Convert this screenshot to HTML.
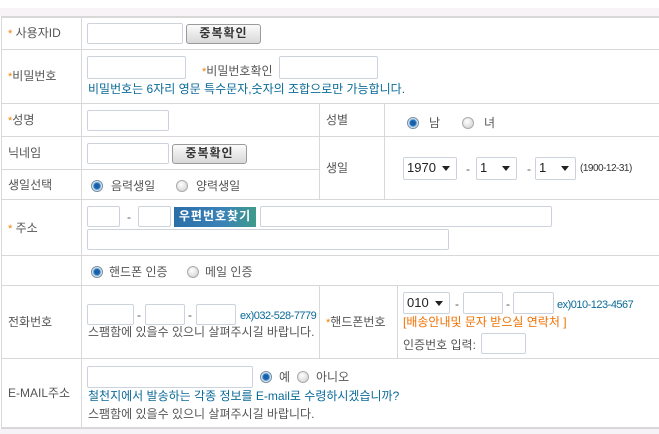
<!DOCTYPE html>
<html><head><meta charset="utf-8"><style>
*{margin:0;padding:0;box-sizing:border-box}
body{width:659px;height:434px;background:#fff;position:relative;overflow:hidden;font-family:"Liberation Sans","Noto Sans CJK KR","NanumGothic",sans-serif;font-size:12px;color:#555}
.a{position:absolute;white-space:nowrap;line-height:14px}
.h{position:absolute;height:1px;background:#d8d8d8}
.v{position:absolute;width:1px;background:#d8d8d8}
.i{position:absolute;border:1px solid #cdd3dc;border-radius:2px;background:#fff}
.s{color:#f08000;font-size:11px}
.btn{position:absolute;border:1px solid #9a9a9a;border-radius:3px;background:linear-gradient(#fbfbfb,#d8d8d8);font-weight:bold;color:#333;text-align:center;line-height:17px;font-size:12px;letter-spacing:1px}
.r{position:absolute;width:12px;height:12px;border-radius:50%;border:1px solid #aaa;background:radial-gradient(circle at 40% 35%,#fff,#ccc)}
.r.on{background:radial-gradient(circle,#1a5fa8 0 2.5px,#5fa8e0 3.5px,#e8eef4 4.5px,#cfd6dc 100%);border-color:#7a8ea0}
.blue{color:#0a6a98}
.sel{position:absolute;border:1px solid #cdd3dc;border-radius:2px;background:#fff;color:#222;font-size:13px;line-height:20px;padding-left:3px}
.sel:after{content:"";position:absolute;right:6px;top:8px;border-left:4px solid transparent;border-right:4px solid transparent;border-top:5px solid #222}
</style></head><body>
<div style="position:absolute;left:0;top:8px;width:659px;height:8px;background:#f7f3f7"></div>
<div style="position:absolute;left:0;top:429px;width:659px;height:5px;background:#f5f3f5"></div>
<div class="h" style="left:1px;top:16px;width:658px;height:2px"></div>
<div class="h" style="left:1px;top:49px;width:658px"></div>
<div class="h" style="left:1px;top:103px;width:658px"></div>
<div class="h" style="left:1px;top:136px;width:658px"></div>
<div class="h" style="left:1px;top:169px;width:318px"></div>
<div class="h" style="left:1px;top:199px;width:658px"></div>
<div class="h" style="left:1px;top:255px;width:658px"></div>
<div class="h" style="left:1px;top:285px;width:658px"></div>
<div class="h" style="left:1px;top:358px;width:658px"></div>
<div class="h" style="left:1px;top:427px;width:658px;height:2px"></div>
<div class="v" style="left:1px;top:16px;height:413px"></div>
<div class="v" style="left:81px;top:16px;height:413px"></div>
<div class="v" style="left:319px;top:103px;height:96px"></div>
<div class="v" style="left:384px;top:103px;height:96px"></div>
<div class="v" style="left:319px;top:285px;height:74px"></div>
<div class="v" style="left:397px;top:285px;height:74px"></div>

<div class="a" style="left:8px;top:26px"><span class="s">*</span> 사용자ID</div>
<div class="i" style="left:87px;top:23px;width:96px;height:21px"></div>
<div class="btn" style="left:186px;top:24px;width:75px;height:20px">중복확인</div>
<div class="a" style="left:8px;top:69px"><span class="s">*</span>비밀번호</div>
<div class="i" style="left:87px;top:56px;width:99px;height:23px"></div>
<div class="a" style="left:202px;top:64px"><span class="s">*</span>비밀번호확인</div>
<div class="i" style="left:279px;top:56px;width:99px;height:23px"></div>
<div class="a blue" style="left:88px;top:82px">비밀번호는 6자리 영문 특수문자,숫자의 조합으로만 가능합니다.</div>
<div class="a" style="left:8px;top:113px"><span class="s">*</span>성명</div>
<div class="i" style="left:87px;top:110px;width:82px;height:21px"></div>
<div class="a" style="left:326px;top:113px">성별</div>
<div class="r on" style="left:407px;top:117px"></div><div class="a" style="left:429px;top:116px">남</div>
<div class="r" style="left:462px;top:117px"></div><div class="a" style="left:484px;top:116px">녀</div>
<div class="a" style="left:8px;top:146px">닉네임</div>
<div class="i" style="left:87px;top:143px;width:82px;height:21px"></div>
<div class="btn" style="left:172px;top:144px;width:75px;height:20px">중복확인</div>
<div class="a" style="left:326px;top:161px">생일</div>
<div class="sel" style="left:403px;top:157px;width:54px;height:23px">1970</div>
<div class="a" style="left:466px;top:162px">-</div>
<div class="sel" style="left:476px;top:157px;width:41px;height:23px">1</div>
<div class="a" style="left:527px;top:162px">-</div>
<div class="sel" style="left:535px;top:157px;width:41px;height:23px">1</div>
<div class="a" style="left:580px;top:162px;font-size:10px;letter-spacing:-.5px;color:#333">(1900-12-31)</div>
<div class="a" style="left:8px;top:178px">생일선택</div>
<div class="r on" style="left:91px;top:180px"></div><div class="a" style="left:111px;top:179px">음력생일</div>
<div class="r" style="left:176px;top:180px"></div><div class="a" style="left:196px;top:179px">양력생일</div>
<div class="a" style="left:8px;top:221px"><span class="s">*</span> 주소</div>
<div class="i" style="left:87px;top:206px;width:33px;height:21px"></div>
<div class="a" style="left:127px;top:210px">-</div>
<div class="i" style="left:138px;top:206px;width:33px;height:21px"></div>
<div style="position:absolute;left:174px;top:207px;width:82px;height:20px;background:linear-gradient(90deg,#2b6ea8,#3a82b8 60%,#3f9a8a);color:#fff;font-weight:bold;font-size:12px;line-height:19px;text-align:center;letter-spacing:1px">우편번호찾기</div>
<div class="i" style="left:260px;top:206px;width:292px;height:21px"></div>
<div class="i" style="left:87px;top:229px;width:362px;height:21px"></div>
<div class="r on" style="left:91px;top:266px"></div><div class="a" style="left:109px;top:265px">핸드폰 인증</div>
<div class="r" style="left:187px;top:266px"></div><div class="a" style="left:205px;top:265px">메일 인증</div>
<div class="a" style="left:8px;top:315px">전화번호</div>
<div class="i" style="left:87px;top:304px;width:47px;height:21px"></div>
<div class="a" style="left:137px;top:308px">-</div>
<div class="i" style="left:145px;top:304px;width:40px;height:21px"></div>
<div class="a" style="left:188px;top:308px">-</div>
<div class="i" style="left:196px;top:304px;width:40px;height:21px"></div>
<div class="a blue" style="left:240px;top:309px;font-size:11px;letter-spacing:-.5px">ex)032-528-7779</div>
<div class="a" style="left:88px;top:325px">스팸함에 있을수 있으니 살펴주시길 바랍니다.</div>
<div class="a" style="left:326px;top:315px"><span class="s">*</span>핸드폰번호</div>
<div class="sel" style="left:403px;top:292px;width:47px;height:22px">010</div>
<div class="a" style="left:455px;top:297px">-</div>
<div class="i" style="left:463px;top:292px;width:40px;height:22px"></div>
<div class="a" style="left:506px;top:297px">-</div>
<div class="i" style="left:513px;top:292px;width:41px;height:22px"></div>
<div class="a blue" style="left:557px;top:298px;font-size:11px;letter-spacing:-.5px">ex)010-123-4567</div>
<div class="a" style="left:403px;top:315px;color:#f07000">[배송안내및 문자 받으실 연락처 ]</div>
<div class="a" style="left:403px;top:338px">인증번호 입력:</div>
<div class="i" style="left:481px;top:333px;width:45px;height:21px"></div>
<div class="a" style="left:8px;top:386px">E-MAIL주소</div>
<div class="i" style="left:87px;top:366px;width:166px;height:22px"></div>
<div class="r on" style="left:260px;top:371px"></div><div class="a" style="left:279px;top:370px">예</div>
<div class="r" style="left:297px;top:371px"></div><div class="a" style="left:316px;top:370px">아니오</div>
<div class="a blue" style="left:88px;top:389px">철천지에서 발송하는 각종 정보를 E-mail로 수령하시겠습니까?</div>
<div class="a" style="left:88px;top:407px">스팸함에 있을수 있으니 살펴주시길 바랍니다.</div>
</body></html>
